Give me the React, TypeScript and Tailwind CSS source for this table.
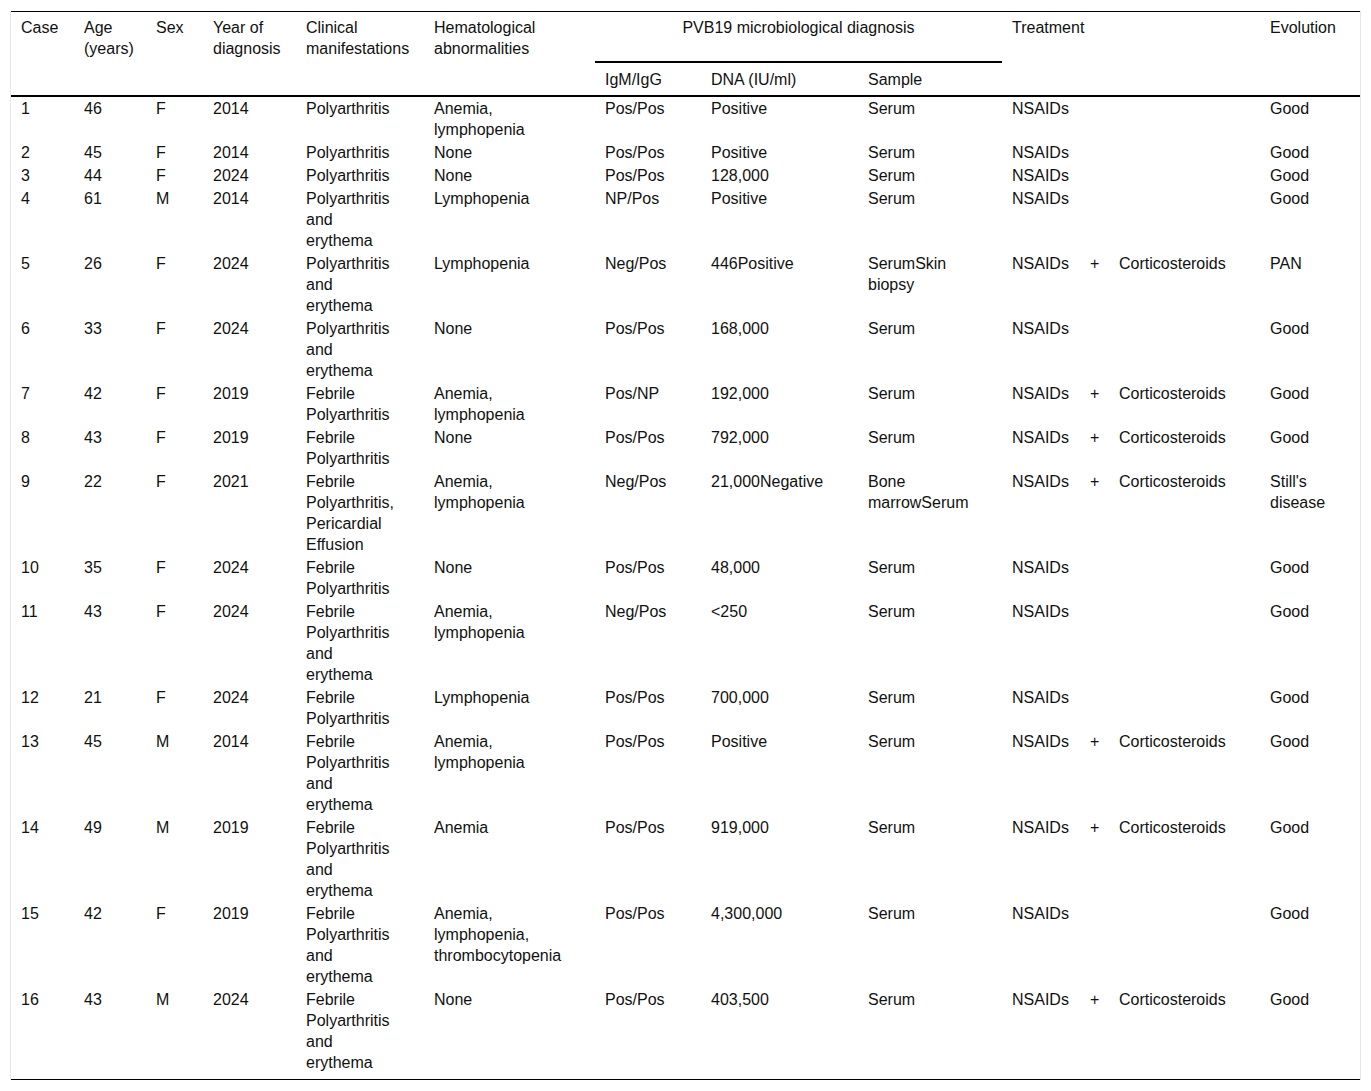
import React from "react";

type Row = {
  c: string; age: string; sex: string; year: string; clin: string; hem: string;
  ig: string; dna: string; sample: string; cort: boolean; evo: string;
};

const rows: Row[] = [
  { c: "1", age: "46", sex: "F", year: "2014", clin: "Polyarthritis", hem: "Anemia, lymphopenia", ig: "Pos/Pos", dna: "Positive", sample: "Serum", cort: false, evo: "Good" },
  { c: "2", age: "45", sex: "F", year: "2014", clin: "Polyarthritis", hem: "None", ig: "Pos/Pos", dna: "Positive", sample: "Serum", cort: false, evo: "Good" },
  { c: "3", age: "44", sex: "F", year: "2024", clin: "Polyarthritis", hem: "None", ig: "Pos/Pos", dna: "128,000", sample: "Serum", cort: false, evo: "Good" },
  { c: "4", age: "61", sex: "M", year: "2014", clin: "Polyarthritis and erythema", hem: "Lymphopenia", ig: "NP/Pos", dna: "Positive", sample: "Serum", cort: false, evo: "Good" },
  { c: "5", age: "26", sex: "F", year: "2024", clin: "Polyarthritis and erythema", hem: "Lymphopenia", ig: "Neg/Pos", dna: "446Positive", sample: "SerumSkin biopsy", cort: true, evo: "PAN" },
  { c: "6", age: "33", sex: "F", year: "2024", clin: "Polyarthritis and erythema", hem: "None", ig: "Pos/Pos", dna: "168,000", sample: "Serum", cort: false, evo: "Good" },
  { c: "7", age: "42", sex: "F", year: "2019", clin: "Febrile Polyarthritis", hem: "Anemia, lymphopenia", ig: "Pos/NP", dna: "192,000", sample: "Serum", cort: true, evo: "Good" },
  { c: "8", age: "43", sex: "F", year: "2019", clin: "Febrile Polyarthritis", hem: "None", ig: "Pos/Pos", dna: "792,000", sample: "Serum", cort: true, evo: "Good" },
  { c: "9", age: "22", sex: "F", year: "2021", clin: "Febrile Polyarthritis, Pericardial Effusion", hem: "Anemia, lymphopenia", ig: "Neg/Pos", dna: "21,000Negative", sample: "Bone marrowSerum", cort: true, evo: "Still's disease" },
  { c: "10", age: "35", sex: "F", year: "2024", clin: "Febrile Polyarthritis", hem: "None", ig: "Pos/Pos", dna: "48,000", sample: "Serum", cort: false, evo: "Good" },
  { c: "11", age: "43", sex: "F", year: "2024", clin: "Febrile Polyarthritis and erythema", hem: "Anemia, lymphopenia", ig: "Neg/Pos", dna: "<250", sample: "Serum", cort: false, evo: "Good" },
  { c: "12", age: "21", sex: "F", year: "2024", clin: "Febrile Polyarthritis", hem: "Lymphopenia", ig: "Pos/Pos", dna: "700,000", sample: "Serum", cort: false, evo: "Good" },
  { c: "13", age: "45", sex: "M", year: "2014", clin: "Febrile Polyarthritis and erythema", hem: "Anemia, lymphopenia", ig: "Pos/Pos", dna: "Positive", sample: "Serum", cort: true, evo: "Good" },
  { c: "14", age: "49", sex: "M", year: "2019", clin: "Febrile Polyarthritis and erythema", hem: "Anemia", ig: "Pos/Pos", dna: "919,000", sample: "Serum", cort: true, evo: "Good" },
  { c: "15", age: "42", sex: "F", year: "2019", clin: "Febrile Polyarthritis and erythema", hem: "Anemia, lymphopenia, thrombocytopenia", ig: "Pos/Pos", dna: "4,300,000", sample: "Serum", cort: false, evo: "Good" },
  { c: "16", age: "43", sex: "M", year: "2024", clin: "Febrile Polyarthritis and erythema", hem: "None", ig: "Pos/Pos", dna: "403,500", sample: "Serum", cort: true, evo: "Good" },
];

const th = "align-top text-left font-normal pl-[10px] pt-[5px] border-b-2 border-black";
const td = "align-top pl-[10px] pt-px pb-px";

export default function App() {
  return (
    <div className="bg-white text-[#111] text-[16px] leading-[21px] pt-[11px] pb-[11px] font-['Liberation_Sans',Arial,sans-serif]">
      <div className="ml-[10px] w-[1351px] border-x border-[#e6e6e6]">
        <table className="w-[1349px] table-fixed border-separate border-spacing-0 border-t border-b border-black">
          <colgroup>
            <col className="w-[63px]" />
            <col className="w-[72px]" />
            <col className="w-[57px]" />
            <col className="w-[93px]" />
            <col className="w-[128px]" />
            <col className="w-[171px]" />
            <col className="w-[106px]" />
            <col className="w-[157px]" />
            <col className="w-[144px]" />
            <col className="w-[78px]" />
            <col className="w-[29px]" />
            <col className="w-[151px]" />
            <col className="w-[100px]" />
          </colgroup>
          <thead>
            <tr className="h-[51px]">
              <th rowSpan={2} className={th}>Case</th>
              <th rowSpan={2} className={th}>Age (years)</th>
              <th rowSpan={2} className={th}>Sex</th>
              <th rowSpan={2} className={`${th} pr-[4px]`}>Year of diagnosis</th>
              <th rowSpan={2} className={`${th} pr-[10px]`}>Clinical manifestations</th>
              <th rowSpan={2} className={`${th} pr-[21px]`}>Hematological abnormalities</th>
              <th colSpan={3} className="align-top font-normal text-center pt-[5px] border-b-2 border-black">
                PVB19 microbiological diagnosis
              </th>
              <th rowSpan={2} colSpan={3} className={th}>Treatment</th>
              <th rowSpan={2} className={`${th} pr-[4px]`}>Evolution</th>
            </tr>
            <tr className="h-[34px]">
              <th className={`${th} pt-[6px]`}>IgM/IgG</th>
              <th className={`${th} pt-[6px]`}>DNA (IU/ml)</th>
              <th className={`${th} pt-[6px]`}>Sample</th>
            </tr>
          </thead>
          <tbody>
            {rows.map((r, i) => {
              const last = i === rows.length - 1;
              const cls = last ? "align-top pl-[10px] pt-px pb-[6px]" : td;
              return (
                <tr key={r.c}>
                  <td className={cls}>{r.c}</td>
                  <td className={cls}>{r.age}</td>
                  <td className={cls}>{r.sex}</td>
                  <td className={cls}>{r.year}</td>
                  <td className={`${cls} pr-[24px]`}>{r.clin}</td>
                  <td className={`${cls} pr-[21px]`}>{r.hem}</td>
                  <td className={cls}>{r.ig}</td>
                  <td className={cls}>{r.dna}</td>
                  <td className={`${cls} pr-[19px]`}>{r.sample}</td>
                  <td className={cls}>NSAIDs</td>
                  <td className={cls}>{r.cort ? "+" : ""}</td>
                  <td className={cls}>{r.cort ? "Corticosteroids" : ""}</td>
                  <td className={`${cls} pr-[4px]`}>{r.evo}</td>
                </tr>
              );
            })}
          </tbody>
        </table>
      </div>
    </div>
  );
}
